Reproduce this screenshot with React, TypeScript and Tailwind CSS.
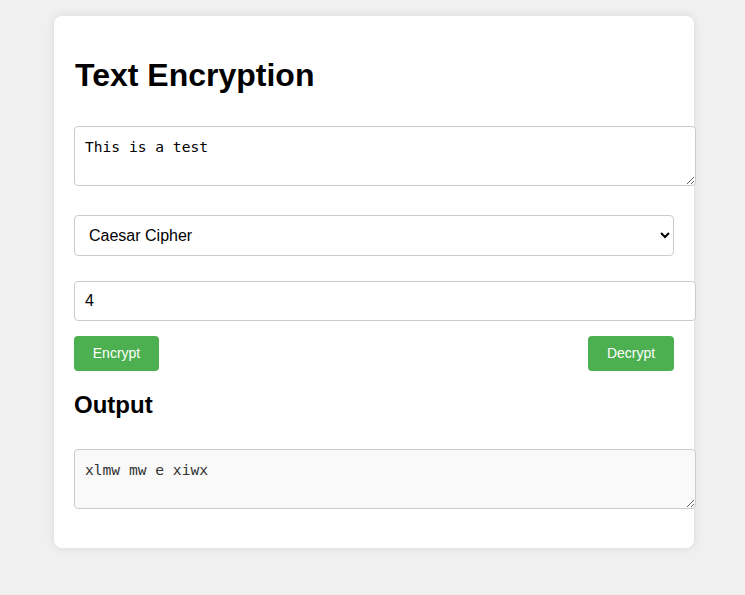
import { useState } from "react";

function caesar(text: string, shift: number) {
  return text.replace(/[a-z]/gi, (c) => {
    const base = c <= "Z" ? 65 : 97;
    return String.fromCharCode(((((c.charCodeAt(0) - base + shift) % 26) + 26) % 26) + base);
  });
}

export default function App() {
  const [input, setInput] = useState("This is a test");
  const [method, setMethod] = useState("caesar");
  const [shift, setShift] = useState("4");
  const [output, setOutput] = useState("xlmw mw e xiwx");

  const run = (dir: 1 | -1) => {
    const n = parseInt(shift, 10) || 0;
    setOutput(caesar(input, n * dir).toLowerCase());
  };

  return (
    <div className="min-h-screen bg-[#f0f0f0] pt-[16px] font-['Liberation_Sans',Arial,sans-serif]">
      <div className="ml-[54px] flex w-[640px] flex-col items-start rounded-[8px] bg-white px-[20px] pt-[20px] pb-[39px] shadow-[0_0_10px_rgba(0,0,0,0.1)]">
        <h1 className="mt-[21px] ml-[1px] text-[32px] leading-[37px] font-bold text-black">
          Text Encryption
        </h1>

        {/* entrada */}
        <textarea
          value={input}
          onChange={(e) => setInput(e.target.value)}
          className="mt-[32px] block h-[60px] w-[622px] rounded-[4px] border border-[#ccc] bg-white p-[10px] font-['DejaVu_Sans_Mono',monospace] text-[14.6px] leading-[20px] text-black outline-none"
        />

        <select
          value={method}
          onChange={(e) => setMethod(e.target.value)}
          className="mt-[29px] block h-[41px] w-[600px] rounded-[4px] border border-[#ccc] bg-white px-[10px] text-[16px] text-black outline-none"
        >
          <option value="caesar">Caesar Cipher</option>
          <option value="reverse">Reverse</option>
        </select>

        <input
          type="text"
          value={shift}
          onChange={(e) => setShift(e.target.value)}
          className="mt-[25px] block h-[40px] w-[622px] rounded-[4px] border border-[#ccc] bg-white px-[10px] text-[16px] text-black outline-none"
        />

        <div className="mt-[15px] flex w-[600px] justify-between">
          <button
            onClick={() => run(1)}
            className="h-[35px] w-[85px] rounded-[4px] bg-[#4caf50] text-[14px] text-white"
          >
            Encrypt
          </button>
          <button
            onClick={() => run(-1)}
            className="h-[35px] w-[86px] rounded-[4px] bg-[#4caf50] text-[14px] text-white"
          >
            Decrypt
          </button>
        </div>

        <h2 className="mt-[20px] text-[24px] leading-[28px] font-bold text-black">Output</h2>

        {/* salida */}
        <textarea
          readOnly
          value={output}
          className="mt-[30px] block h-[60px] w-[622px] rounded-[4px] border border-[#ccc] bg-[#f9f9f9] p-[10px] font-['DejaVu_Sans_Mono',monospace] text-[14.6px] leading-[20px] text-[#333] outline-none"
        />
      </div>
    </div>
  );
}
